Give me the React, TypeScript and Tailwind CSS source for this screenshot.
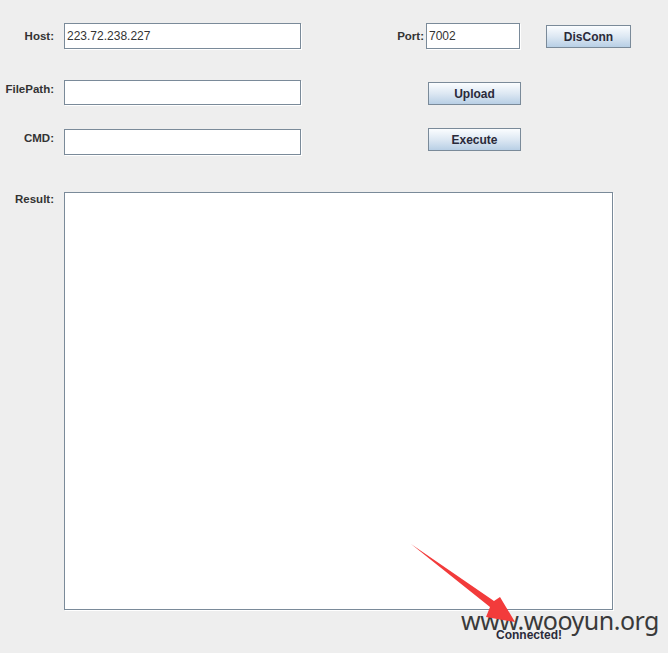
import React from "react";

const font = { fontFamily: '"Liberation Sans", Arial, sans-serif' };

function Field({ w, h, value }: { w: string; h: string; value?: string }) {
  return (
    <div
      className={`${w} ${h} bg-white border border-[#7a8a99] shadow-[1px_1px_0_#ffffff] flex items-center pl-[2px] text-[12px] text-[#333333]`}
    >
      {value}
    </div>
  );
}

function Btn({ label, w }: { label: string; w: string }) {
  return (
    <div
      className={`${w} h-[23px] border border-[#7a8a99] bg-gradient-to-b from-[#fbfdff] via-[#dde8f3] to-[#b8cfe5] flex items-center justify-center text-[12px] font-bold text-[#2a2a3a]`}
    >
      {label}
    </div>
  );
}

export default function App() {
  return (
    <div
      className="relative w-[668px] h-[653px] bg-[#eeeeee] overflow-hidden flex flex-col"
      style={font}
    >
      {/* Row 1 */}
      <div className="flex items-start mt-[23px]">
        <div className="w-[54px] text-right text-[11.5px] font-bold text-[#333333] leading-[14px] mt-[6px]">
          Host:
        </div>
        <div className="ml-[10px]">
          <Field w="w-[237px]" h="h-[26px]" value="223.72.238.227" />
        </div>
        <div className="w-[123px] text-right text-[11.5px] font-bold text-[#333333] leading-[14px] mt-[6px]">
          Port:
        </div>
        <div className="ml-[2px]">
          <Field w="w-[94px]" h="h-[26px]" value="7002" />
        </div>
        <div className="ml-[26px] mt-[2px]">
          <Btn label="DisConn" w="w-[85px]" />
        </div>
      </div>

      {/* Row 2 */}
      <div className="flex items-start mt-[31px]">
        <div className="w-[54px] text-right text-[11.5px] font-bold text-[#333333] leading-[14px] mt-[2px]">
          FilePath:
        </div>
        <div className="ml-[10px]">
          <Field w="w-[237px]" h="h-[25px]" />
        </div>
        <div className="ml-[127px] mt-[2px]">
          <Btn label="Upload" w="w-[93px]" />
        </div>
      </div>

      {/* Row 3 */}
      <div className="flex items-start mt-[23px]">
        <div className="w-[54px] text-right text-[11.5px] font-bold text-[#333333] leading-[14px] mt-[3px]">
          CMD:
        </div>
        <div className="ml-[10px] mt-[1px]">
          <Field w="w-[237px]" h="h-[26px]" />
        </div>
        <div className="ml-[127px]">
          <Btn label="Execute" w="w-[93px]" />
        </div>
      </div>

      {/* Row 4 */}
      <div className="flex items-start mt-[37px]">
        <div className="w-[54px] text-right text-[11.5px] font-bold text-[#333333] leading-[12px] mt-[1px]">
          Result:
        </div>
        <div className="ml-[10px] w-[549px] h-[418px] bg-white border border-[#7a8a99] shadow-[1px_1px_0_#ffffff]" />
      </div>

      <div className="mt-[18px] ml-[496px] text-[12px] font-bold text-[#2a2a3a] leading-[14px]">
        Connected!
      </div>

      {/* watermark */}
      <div
        className="absolute left-[461px] top-[605px] text-[25px] leading-[30px] text-[#3a3a3a] tracking-[-0.5px]"
        style={{ fontFamily: '"Noto Sans", "DejaVu Sans", sans-serif' }}
      >
        www.wooyun.org
      </div>

      {/* red arrow */}
      <svg className="absolute left-0 top-0" width="668" height="653" viewBox="0 0 668 653">
        <polygon
          points="411,544 494,601 500,597 515,622 486,617 490,607"
          fill="#f23b3b"
        />
      </svg>
    </div>
  );
}
